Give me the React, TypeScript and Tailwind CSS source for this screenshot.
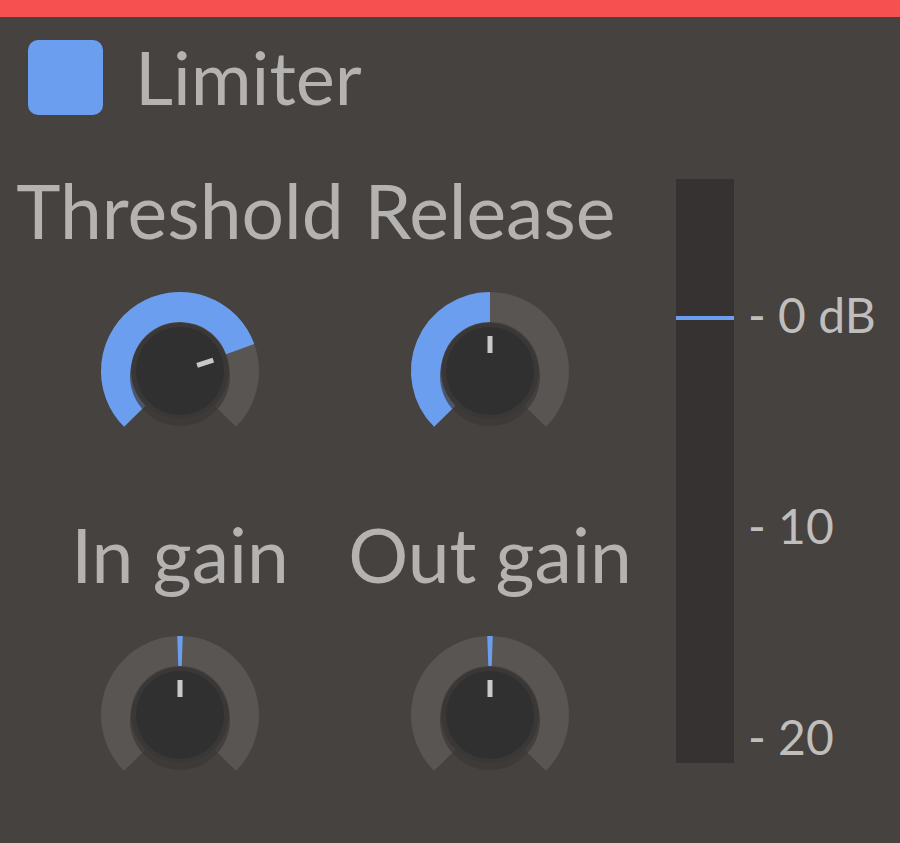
import React from 'react';

const font = { fontFamily: 'Lato, "Open Sans", sans-serif' };

function polar(cx: number, cy: number, r: number, deg: number) {
  const a = (deg * Math.PI) / 180;
  return [cx + r * Math.sin(a), cy - r * Math.cos(a)];
}

function arc(cx: number, cy: number, r: number, from: number, to: number) {
  const [x1, y1] = polar(cx, cy, r, from);
  const [x2, y2] = polar(cx, cy, r, to);
  const large = to - from > 180 ? 1 : 0;
  return `M ${x1} ${y1} A ${r} ${r} 0 ${large} 1 ${x2} ${y2}`;
}

// from/to are the blue value range in degrees, 0 = top, -135..135 is the full sweep
function Knob({ from, to, angle }: { from: number; to: number; angle: number }) {
  const c = 85;
  return (
    <svg width="170" height="170" viewBox="0 0 170 170">
      <path d={arc(c, c, 64, -135, 135)} stroke="#585553" strokeWidth="30" fill="none" />
      <path d={arc(c, c, 64, from, to)} stroke="#6c9ef0" strokeWidth="30" fill="none" />
      <circle cx={c} cy={c + 5} r="50" fill="#3a3736" opacity="0.7" />
      <circle cx={c} cy={c} r="48" fill="#3a3837" />
      <circle cx={c} cy={c} r="44" fill="#313030" />
      <g transform={`rotate(${angle} ${c} ${c})`}>
        <rect x={c - 2.5} y={c - 35} width="5" height="17" fill="#c9c9c9" />
      </g>
    </svg>
  );
}

function Control({ label, from, to, angle }: { label: string; from: number; to: number; angle: number }) {
  return (
    <div className="flex flex-col items-center w-[310px]">
      <div className="h-[75px] leading-[75px] text-[75px] text-[#b5b3b2] whitespace-nowrap -mt-[6px]" style={font}>
        {label}
      </div>
      <div className="mt-[38px]">
        <Knob from={from} to={to} angle={angle} />
      </div>
    </div>
  );
}

export default function App() {
  return (
    <div className="w-[900px] h-[843px] bg-[#46423f] flex flex-col overflow-hidden">
      <div className="h-[17px] bg-[#f75050]" />

      {/* header */}
      <div className="flex items-center pl-[28px] pt-[23px] gap-[32px]">
        <div className="w-[75px] h-[75px] rounded-[10px] bg-[#6c9ef0]" />
        <div className="text-[74px] leading-[75px] text-[#b5b3b2] -mt-[2px]" style={font}>
          Limiter
        </div>
      </div>

      <div className="flex pl-[25px] pt-[64px]">
        <div className="grid grid-cols-2 gap-y-[67px]">
          <Control label="Threshold" from={-135} to={70} angle={72} />
          <Control label="Release" from={-135} to={0} angle={0} />
          <Control label="In gain" from={-2} to={2} angle={0} />
          <Control label="Out gain" from={-2} to={2} angle={0} />
        </div>

        {/* meter */}
        <div className="ml-[31px] flex">
          <div className="relative w-[58px] h-[584px] bg-[#353231]">
            <div className="absolute left-0 right-0 top-[137px] h-[4px] bg-[#6c9ef0]" />
          </div>
          <div className="flex flex-col pl-[14px] pt-[106px] gap-[151px] text-[48px] leading-[60px] text-[#c0bebd] whitespace-nowrap" style={font}>
            <div>- 0 dB</div>
            <div>- 10</div>
            <div>- 20</div>
          </div>
        </div>
      </div>
    </div>
  );
}
